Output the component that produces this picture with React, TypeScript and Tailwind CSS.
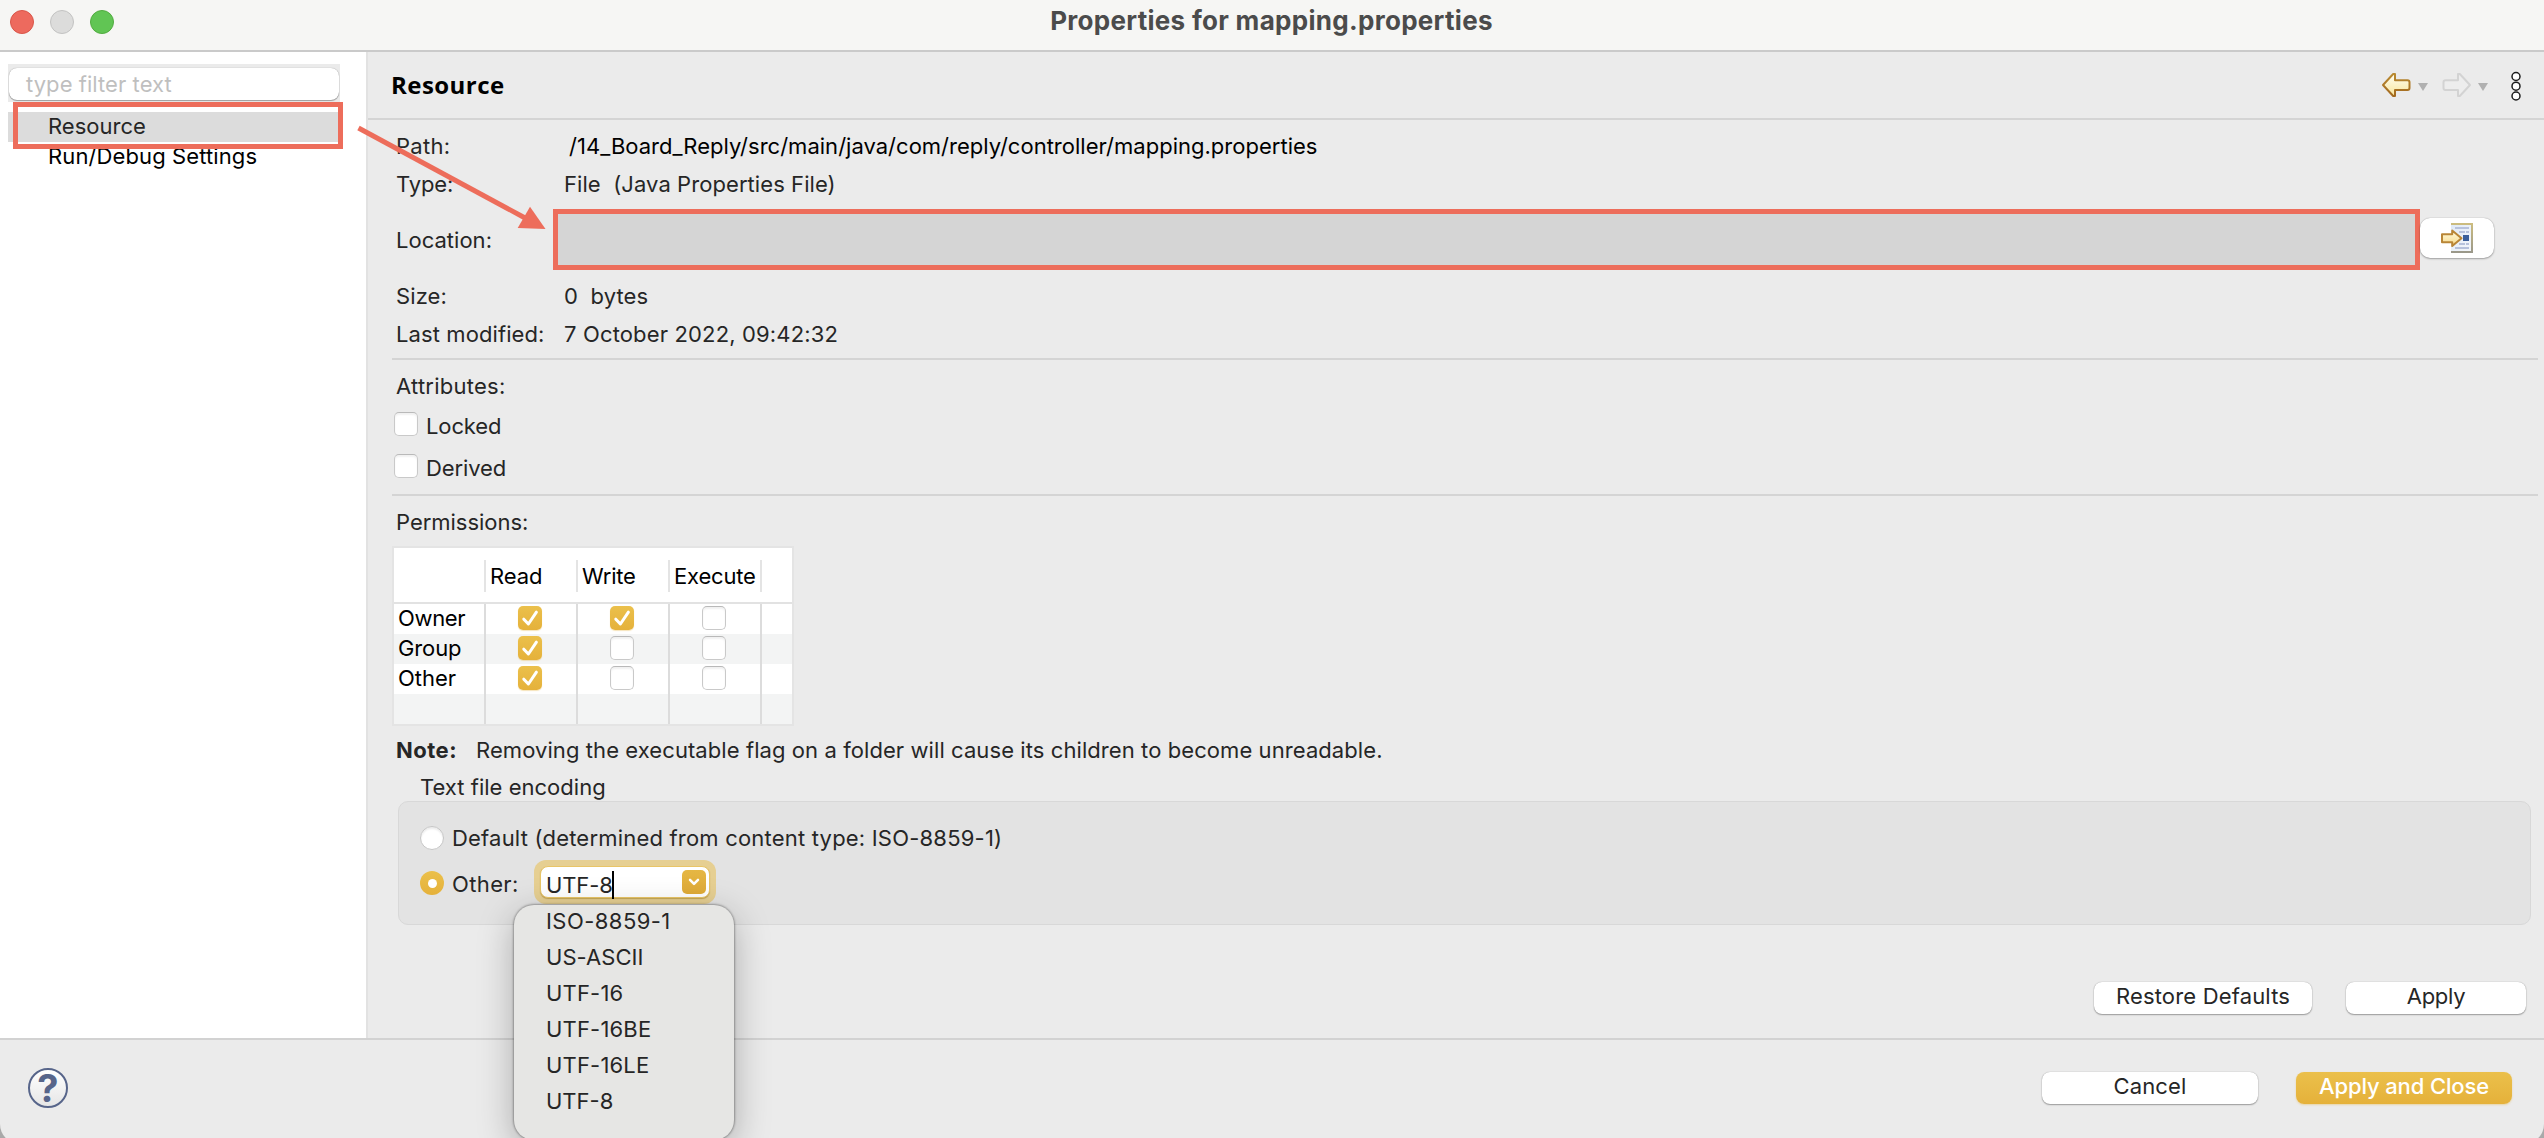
import React from "react";

const encodings = [
  { name: "ISO-8859-1", tracking: "tracking-[0.45px]" },
  { name: "US-ASCII", tracking: "tracking-[0.05px]" },
  { name: "UTF-16", tracking: "tracking-[0.18px]" },
  { name: "UTF-16BE", tracking: "tracking-[0.18px]" },
  { name: "UTF-16LE", tracking: "tracking-[0.18px]" },
  { name: "UTF-8", tracking: "tracking-[0px]" },
];

const permissions = [
  { who: "Owner", tracking: "tracking-[-0.35px]", flags: [true, true, false] },
  { who: "Group", tracking: "tracking-[-0.12px]", flags: [true, false, false] },
  { who: "Other", tracking: "tracking-[0px]", flags: [true, false, false] },
];

function Checkbox({ checked = false }: { checked?: boolean }) {
  if (checked) {
    return (
      <span className="flex size-6 items-center justify-center rounded-[5px] bg-linear-to-b from-[#ebc04b] to-[#e5b13a] shadow-[0_1px_1px_rgba(229,177,58,0.35)]">
        <svg viewBox="0 0 24 24" className="size-6" fill="none" stroke="#fff" strokeWidth="3" strokeLinecap="round" strokeLinejoin="round">
          <path d="M5.800 13.200 10.400 18 18.400 6.200" />
        </svg>
      </span>
    );
  }
  return (
    <span className="block size-6 rounded-[5px] border border-[#c9c9c9] border-t-[#b9b9b9] bg-white shadow-[inset_0_2px_2px_rgba(0,0,0,0.06)]" />
  );
}

function Button({ children, className = "" }: { children: React.ReactNode; className?: string }) {
  return (
    <button
      className={
        "flex h-8 items-center justify-center rounded-[8px] bg-white pb-1 text-[22px] leading-[26px] text-[#262626] shadow-[0_0_1px_rgba(0,0,0,0.35),0_1px_1.5px_rgba(0,0,0,0.32)] " +
        className
      }
    >
      {children}
    </button>
  );
}

function BackArrow() {
  return (
    <svg width="30" height="26" viewBox="0 0 30 26">
      <defs>
        <linearGradient id="back" x1="0" y1="0" x2="0" y2="1">
          <stop offset="0" stopColor="#fffef2" />
          <stop offset="1" stopColor="#f8e59b" />
        </linearGradient>
        <linearGradient id="backEdge" x1="0" y1="0" x2="0" y2="1">
          <stop offset="0" stopColor="#b98a32" />
          <stop offset="1" stopColor="#a3691f" />
        </linearGradient>
      </defs>
      <path d="M2 13 12.200 2H14v6.300h12.500a2 2 0 0 1 2 2v5.600a2 2 0 0 1-2 2H14V24h-1.800Z" fill="url(#back)" stroke="url(#backEdge)" strokeWidth="2" strokeLinejoin="round" />
    </svg>
  );
}

function ForwardArrow() {
  return (
    <svg width="30" height="26" viewBox="0 0 30 26">
      <path d="M28 13 17.800 2H16v6.300H3.500a2 2 0 0 0-2 2v5.600a2 2 0 0 0 2 2H16V24h1.800Z" fill="#ededed" stroke="#d3d3d3" strokeWidth="2" strokeLinejoin="round" />
    </svg>
  );
}

function Caret() {
  return (
    <svg width="10" height="8" viewBox="0 0 10 8">
      <path d="M0 0h10L5 8Z" fill="#b0b0b0" />
    </svg>
  );
}

function ShowInExplorerIcon() {
  return (
    <svg width="32" height="30" viewBox="0 0 32 30">
      <defs>
        <linearGradient id="page" x1="0" y1="0" x2="1" y2="1">
          <stop offset="0" stopColor="#dfeaf8" />
          <stop offset="1" stopColor="#f4f6fa" />
        </linearGradient>
        <linearGradient id="pageEdge" x1="0" y1="0" x2="0" y2="1">
          <stop offset="0" stopColor="#cdbd7f" />
          <stop offset="1" stopColor="#99978a" />
        </linearGradient>
        <linearGradient id="goto" x1="0" y1="0" x2="0" y2="1">
          <stop offset="0" stopColor="#fffbe0" />
          <stop offset="1" stopColor="#f6d98a" />
        </linearGradient>
      </defs>
      <rect x="10" y="0" width="22" height="30" fill="url(#pageEdge)" />
      <rect x="10" y="2" width="20" height="26" fill="url(#page)" />
      <path d="M14 5h14M18 9h6M25 9h3M18 21h6M25 21h3M14 25h14" stroke="#b7c2dc" strokeWidth="2" />
      <rect x="22" y="12" width="6" height="6" fill="#3b5f9b" />
      <path d="M1 11.200h10.200V7.500L20.500 15.200 11.200 23V19.200H1Z" fill="url(#goto)" stroke="#b98637" strokeWidth="2" strokeLinejoin="round" />
    </svg>
  );
}

function TitleBar() {
  return (
    <header className="flex h-[52px] shrink-0 border-b-2 border-[#cacaca] bg-[#f6f6f4]">
      <div className="flex w-[368px] gap-4 pl-[10px] pt-[10px]">
        <span className="size-6 rounded-full border border-[#d95649] bg-[#ed6a5e]" />
        <span className="size-6 rounded-full border border-[#c3c3c2] bg-[#dcdcdb]" />
        <span className="size-6 rounded-full border border-[#52ac40] bg-[#61c554]" />
      </div>
      <h1 className="w-[1807px] pt-[3px] text-center text-[26px] font-bold leading-9 tracking-[0.3px] text-[#4b4b4b]">
        Properties for mapping.properties
      </h1>
    </header>
  );
}

function Sidebar() {
  return (
    <aside className="w-[368px] shrink-0 border-r-2 border-[#e2e2e2] bg-white pl-2 pt-3">
      <div className="h-[38px] w-[332px] bg-[#ebebeb] px-px pt-1">
        <div className="flex h-8 items-center rounded-[8px] bg-white pl-[17px] text-[22px] leading-8 tracking-[0.06px] text-[#bfbfbf] shadow-[0_0_1px_rgba(0,0,0,0.4),0_1px_1px_rgba(0,0,0,0.3)]">
          type filter text
        </div>
      </div>
      <nav className="mt-[10px] w-[334px] text-[22px] leading-[28px]">
        <div className="h-[30px] bg-[#dcdcdc] pl-10 text-[#262626]">Resource</div>
        <div className="h-[30px] pl-10 tracking-[0.11px] text-black">Run/Debug Settings</div>
      </nav>
    </aside>
  );
}

function Field({ label, labelClass = "", height = "h-[38px]", children }: { label: string; labelClass?: string; height?: string; children: React.ReactNode }) {
  return (
    <div className={"flex items-center " + height}>
      <span className={"w-[168px] shrink-0 " + labelClass}>{label}</span>
      {children}
    </div>
  );
}

function PermissionsTable() {
  return (
    <div className="mt-[9px] h-[180px] w-[402px] border-2 border-[#e4e4e4] bg-white text-black">
      <div className="flex h-14 items-start border-b-2 border-[#e2e2e2] pt-3">
        <span className="h-8 w-[92px] border-r-2 border-[#e4e4e4]" />
        <span className="h-8 w-[92px] border-r-2 border-[#e4e4e4] pl-1 leading-[32px] tracking-[-0.07px]">Read</span>
        <span className="h-8 w-[92px] border-r-2 border-[#e4e4e4] pl-1 leading-[32px] tracking-[-0.2px]">Write</span>
        <span className="h-8 w-[92px] border-r-2 border-[#e4e4e4] pl-1 leading-[32px] tracking-[-0.18px]">Execute</span>
      </div>
      {permissions.map((row) => (
        <div key={row.who} className="flex h-[30px] even:bg-white odd:bg-[#f3f4f4]">
          <span className={"w-[92px] border-r-2 border-[#dcdcdc] pl-1 leading-[28px] " + row.tracking}>{row.who}</span>
          {row.flags.map((on, i) => (
            <span key={i} className="flex w-[92px] justify-center border-r-2 border-[#dcdcdc] pr-0.5 pt-0.5">
              <Checkbox checked={on} />
            </span>
          ))}
        </div>
      ))}
      <div className="flex h-[30px] bg-[#f3f4f4]">
        <span className="w-[92px] border-r-2 border-[#dcdcdc]" />
        <span className="w-[92px] border-r-2 border-[#dcdcdc]" />
        <span className="w-[92px] border-r-2 border-[#dcdcdc]" />
        <span className="w-[92px] border-r-2 border-[#dcdcdc]" />
      </div>
    </div>
  );
}

function EncodingCombo() {
  return (
    <div className="relative ml-4 h-11 w-[182px] rounded-[12px] bg-[#e6cf92] p-[6px]">
      <div className="flex h-8 w-[170px] items-center rounded-[8px] border border-[#e9c566] bg-white pl-[5px] pr-[3px] shadow-[0_1px_1px_rgba(160,120,20,0.5)]">
        <span className="relative top-[3px] leading-[30px] tracking-[-0.1px]">UTF-8</span>
        <span className="relative top-[3px] -ml-px h-7 w-0.5 bg-black" />
        <span className="ml-auto flex size-6 items-center justify-center rounded-[5px] bg-linear-to-b from-[#e5b744] to-[#e0ab37]">
          <svg width="12" height="8" viewBox="0 0 12 8" fill="none" stroke="#fff" strokeWidth="2.500" strokeLinecap="round" strokeLinejoin="round">
            <path d="M2 1.800 6 5.800 10 1.800" />
          </svg>
        </span>
      </div>
      <ul className="absolute -left-5 top-[45px] z-10 h-[235px] w-[220px] rounded-[20px] bg-[#e6e6e4] pl-8 pt-px text-[#262626] shadow-[0_0_2px_1px_rgba(0,0,0,0.3),0_10px_36px_rgba(0,0,0,0.28)]">
        {encodings.map((e) => (
          <li key={e.name} className={"h-9 leading-[30px] " + e.tracking}>{e.name}</li>
        ))}
      </ul>
    </div>
  );
}

function Resource() {
  return (
    <main className="flex min-w-0 flex-1 flex-col text-[22px] leading-[30px] text-[#262626]">
      <div className="flex h-[68px] items-center border-b-2 border-[#d4d4d4] pl-[23px]">
        <h2 className="font-['Open_Sans'] text-[24px] font-bold leading-[30px] tracking-[0.45px] text-black">Resource</h2>
        <div className="ml-auto flex items-center pr-[22px]">
          <BackArrow />
          <span className="ml-[7px] mt-1"><Caret /></span>
          <span className="ml-[14px] flex"><ForwardArrow /></span>
          <span className="ml-[6px] mt-1"><Caret /></span>
          <svg className="ml-[22px] mt-0.5" width="12" height="32" viewBox="0 0 12 32" fill="#fff" stroke="#1c1c1c" strokeWidth="1.500">
            <circle cx="6" cy="6.500" r="4" />
            <circle cx="6" cy="16.200" r="4" />
            <circle cx="6" cy="26" r="4" />
          </svg>
        </div>
      </div>

      <section className="pl-7 pt-[7px]">
        <Field label="Path:" labelClass="tracking-[0.3px]">
          <span className="ml-[5px] tracking-[0.015px] text-black">/14_Board_Reply/src/main/java/com/reply/controller/mapping.properties</span>
        </Field>
        <Field label="Type:" labelClass="tracking-[-0.1px]">
          <span className="whitespace-pre tracking-[0.07px]">{"File  (Java Properties File)"}</span>
        </Field>
        <Field label="Location:" labelClass="tracking-[0.02px]" height="h-[74px]">
          <div className="-ml-[11px] mb-px h-[61px] w-[1867px] shrink-0 border-[5px] border-[#ed6d5b] bg-[#d5d5d5]" />
          <button className="mb-1 flex h-10 w-[74px] items-center justify-center rounded-[10px] bg-white shadow-[0_0_1px_rgba(0,0,0,0.35),0_1px_2px_rgba(0,0,0,0.3)]">
            <ShowInExplorerIcon />
          </button>
        </Field>
        <Field label="Size:" labelClass="tracking-[0.1px]">
          <span className="whitespace-pre tracking-[0.1px]">{"0  bytes"}</span>
        </Field>
        <Field label="Last modified:" labelClass="tracking-[0.1px]">
          <span className="tracking-[0.15px]">7 October 2022, 09:42:32</span>
        </Field>
      </section>

      <section className="ml-6 mr-[6px] mt-[5px] border-t-2 border-[#d4d4d4] pt-[11px]">
        <h3 className="ml-1 tracking-[0.25px]">Attributes:</h3>
        <label className="mt-[10px] flex h-[30px] items-start pl-0.5">
          <span className="mt-px"><Checkbox /></span>
          <span className="ml-2 tracking-[-0.12px]">Locked</span>
        </label>
        <label className="mt-3 flex h-[30px] items-start pl-0.5">
          <span className="mt-px"><Checkbox /></span>
          <span className="ml-2 tracking-[-0.1px]">Derived</span>
        </label>
      </section>

      <section className="ml-6 mr-[6px] mt-[11px] border-t-2 border-[#d4d4d4] pt-[11px]">
        <h3 className="ml-1 tracking-[-0.03px]">Permissions:</h3>
        <PermissionsTable />
        <p className="mt-[9px] flex pl-1">
          <b className="w-[80px] tracking-[0.5px]">Note:</b>
          <span className="tracking-[0.08px]">Removing the executable flag on a folder will cause its children to become unreadable.</span>
        </p>
        <h3 className="mt-[7px] h-[29px] pl-[28px] tracking-[0.02px]">Text file encoding</h3>
        <div className="ml-[6px] h-[124px] w-[2133px] rounded-[10px] border border-[#d8d8d8] bg-[#e3e3e3] pl-[21px] pt-[21px]">
          <div className="flex h-[30px] items-center">
            <span className="size-6 rounded-full border border-[#c6c6c6] bg-white shadow-[inset_0_2px_2px_rgba(0,0,0,0.08)]" />
            <span className="ml-2 tracking-[0.2px]">Default (determined from content type: ISO-8859-1)</span>
          </div>
          <div className="mt-[7px] flex h-11 items-center">
            <span className="mt-0.5 flex size-6 items-center justify-center rounded-full bg-linear-to-b from-[#ebc04b] to-[#e5b13a]">
              <span className="size-[9px] rounded-full bg-white" />
            </span>
            <span className="ml-2 mt-1 w-[66px] tracking-[0.37px]">Other:</span>
            <EncodingCombo />
          </div>
        </div>
      </section>

      <div className="mt-auto flex justify-end gap-[34px] pb-6 pr-[18px]">
        <Button className="w-[218px] tracking-[0.17px]">Restore Defaults</Button>
        <Button className="w-[180px] tracking-[-0.3px]">Apply</Button>
      </div>
    </main>
  );
}

function Footer() {
  return (
    <footer className="flex h-[106px] shrink-0 border-t-2 border-[#d2d2d2] pl-7 pr-8">
      <div className="mt-7 flex size-10 items-center justify-center rounded-full border-2 border-[#57658a] bg-linear-to-b from-white to-[#e6e6e6] text-[38px] font-bold leading-none text-[#57658a]">
        ?
      </div>
      <div className="ml-auto mt-8 flex gap-[38px]">
        <Button className="w-[216px] tracking-[0.13px]">Cancel</Button>
        <button className="flex h-8 w-[216px] items-center justify-center rounded-[8px] bg-linear-to-b from-[#ebc04b] to-[#e5b13a] pb-1 text-[22px] font-medium leading-[26px] tracking-[-0.14px] text-white shadow-[0_1px_2px_rgba(229,177,58,0.4)]">
          Apply and Close
        </button>
      </div>
    </footer>
  );
}

export default function App() {
  return (
    <div className="h-[1138px] w-[2544px] overflow-hidden bg-[#a9a9a9] font-['Inter',sans-serif]">
      <div className="relative flex h-[1144px] flex-col overflow-hidden rounded-b-[20px] bg-[#ebebeb]">
        <TitleBar />
        <div className="flex h-[986px] shrink-0">
          <Sidebar />
          <Resource />
        </div>
        <Footer />
        <div className="pointer-events-none absolute left-[13px] top-[102px] h-[47px] w-[330px] border-[5px] border-[#ed6d5b]" />
        <svg className="pointer-events-none absolute left-[350px] top-[120px]" width="200" height="114" viewBox="350 120 200 114">
          <path d="M358.500 128 526 218.500" stroke="#ed6d5b" strokeWidth="5" />
          <path d="M545.500 229 530 206.700 517.700 228Z" fill="#ed6d5b" />
        </svg>
      </div>
    </div>
  );
}
